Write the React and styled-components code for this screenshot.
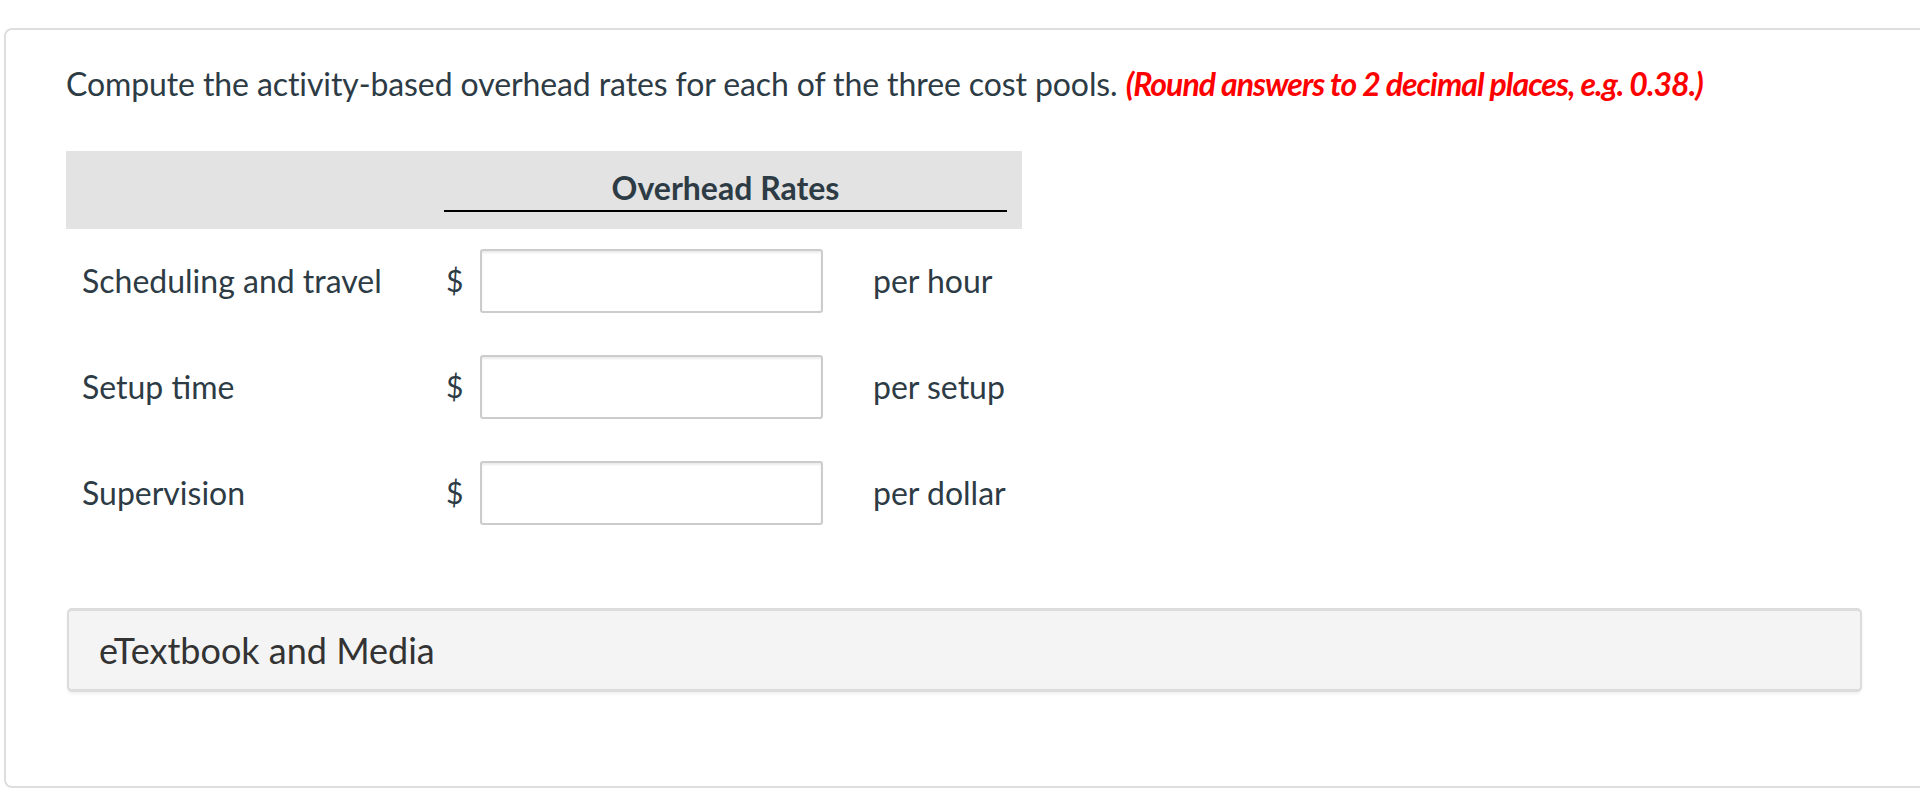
import React from "react";
import styled, { createGlobalStyle } from "styled-components";

const Global = createGlobalStyle`
  html, body { margin: 0; padding: 0; background: #ffffff; }
  body { font-family: Lato, "Open Sans", sans-serif; color: #2d3b45; }
  #root { padding: 28px 0 0 4px; }
`;

const Card = styled.div`
  box-sizing: border-box;
  width: 1918px;
  height: 760px;
  border: 2px solid #dedede;
  border-right: none;
  border-radius: 8px 0 0 8px;
  padding: 33px 60px 0 60px;
  background: #fff;
`;

const Prompt = styled.p`
  margin: 0;
  font-size: 32px;
  line-height: 42px;
  letter-spacing: -0.1px;
  color: #2d3b45;
`;

const Hint = styled.span`
  color: #ff0000;
  font-weight: 700;
  font-style: italic;
  letter-spacing: -1px;
`;

const Table = styled.div`
  display: grid;
  grid-template-columns: 378px 32px 357px 189px;
  width: 956px;
  margin-top: 46px;
`;

const HeadBlank = styled.div`
  background: #e3e3e3;
  height: 78px;
`;

const HeadCell = styled.div`
  grid-column: 2 / span 3;
  background: #e3e3e3;
  height: 78px;
  padding: 0 15px 17px 0;
  box-sizing: border-box;
  display: flex;
  align-items: flex-end;
`;

const HeadTitle = styled.div`
  flex: 1;
  text-align: center;
  font-weight: 700;
  font-size: 32px;
  line-height: 36px;
  padding-bottom: 4px;
  border-bottom: 2px solid #000;
  color: #2d3b45;
`;

const Label = styled.div`
  display: flex;
  align-items: center;
  padding-left: 16px;
  padding-bottom: 2px;
  box-sizing: border-box;
  font-size: 32px;
  height: 64px;
  margin-top: ${(p) => (p.$first ? "20px" : "42px")};
`;

const Dollar = styled(Label)`
  padding-left: 2px;
  font-size: 30px;
`;

const InputWrap = styled.div`
  display: flex;
  align-items: center;
  height: 64px;
  margin-top: ${(p) => (p.$first ? "20px" : "42px")};
  padding-left: 4px;
`;

const Field = styled.input`
  box-sizing: border-box;
  width: 343px;
  height: 64px;
  border: 2px solid #cccccc;
  border-radius: 3px;
  box-shadow: inset 0 2px 2px rgba(0, 0, 0, 0.08);
  background: #fff;
  font: 28px Lato, sans-serif;
  padding: 0 10px;
  outline: none;
`;

const Unit = styled(Label)`
  padding-left: 40px;
`;

const Media = styled.div`
  box-sizing: border-box;
  margin-top: 83px;
  margin-left: 1px;
  height: 84px;
  background: #f4f4f4;
  border: 2px solid #dcdcdc;
  border-top-width: 3px;
  border-bottom-width: 3px;
  border-radius: 5px;
  box-shadow: 0 2px 3px rgba(0, 0, 0, 0.06);
  display: flex;
  align-items: center;
  padding-left: 30px;
  font-size: 36px;
  color: #333;
`;

const rows = [
  ["Scheduling and travel", "per hour"],
  ["Setup time", "per setup"],
  ["Supervision", "per dollar"],
];

export default function App() {
  return (
    <>
      <Global />
      <Card>
        <Prompt>
          Compute the activity-based overhead rates for each of the three cost pools.{" "}
          <Hint>(Round answers to 2 decimal places, e.g. 0.38.)</Hint>
        </Prompt>
        <Table>
          <HeadBlank />
          <HeadCell>
            <HeadTitle>Overhead Rates</HeadTitle>
          </HeadCell>
          {rows.map(([label, unit], i) => (
            <React.Fragment key={label}>
              <Label $first={i === 0}>{label}</Label>
              <Dollar $first={i === 0}>$</Dollar>
              <InputWrap $first={i === 0}>
                <Field type="text" aria-label={label} />
              </InputWrap>
              <Unit $first={i === 0}>{unit}</Unit>
            </React.Fragment>
          ))}
        </Table>
        <Media>eTextbook and Media</Media>
      </Card>
    </>
  );
}
